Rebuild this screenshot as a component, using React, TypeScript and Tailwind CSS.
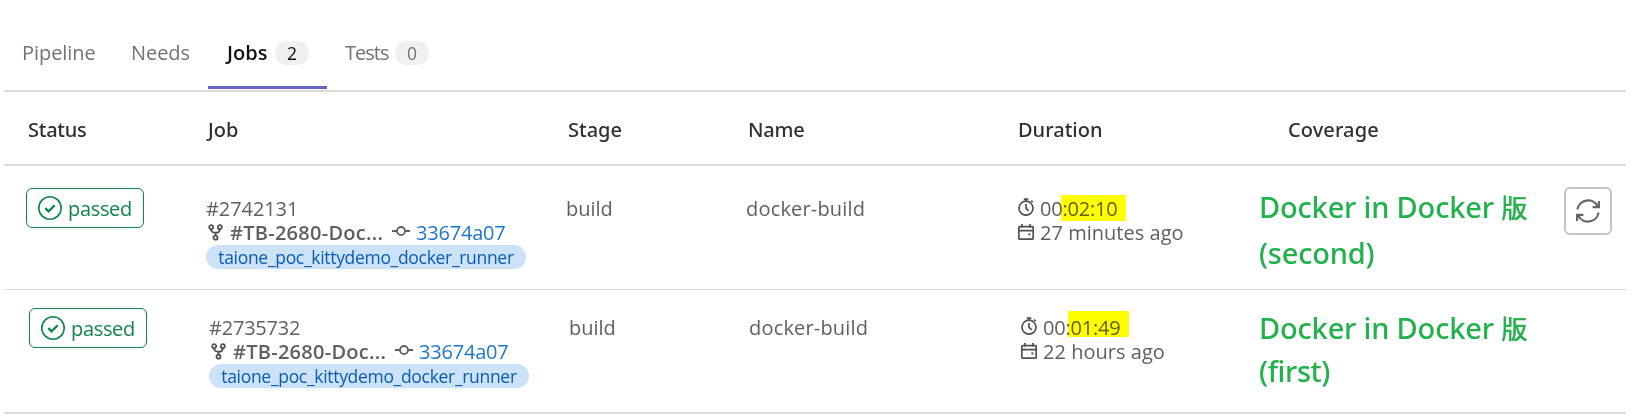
import type { ReactNode } from 'react';

type Job = {
  id: string;
  idTracking: string;
  highlight: string;
  duration: string;
  finished: string;
  note: string;
  noteClass: string;
  noteTracking: string;
  retry: boolean;
  rowClass: string;
  gridClass: string;
  badgeClass: string;
  cellClass: string;
};

const jobs: Job[] = [
  {
    id: '#2742131',
    idTracking: 'tracking-[-0.08px]',
    highlight: 'left-[21px] top-[-2px] w-[65px]',
    duration: '00:02:10',
    finished: '27 minutes ago',
    note: '(second)',
    noteClass: 'pt-[18px] leading-[46px]',
    noteTracking: 'tracking-[-0.2px]',
    retry: true,
    rowClass: 'h-[124px] border-b border-[#dbdbdb]',
    gridClass: 'grid-cols-[180px_360px_180px_271px_242px_305px_1fr] pl-[22px]',
    badgeClass: 'mt-[22px]',
    cellClass: 'pt-[31px]',
  },
  {
    id: '#2735732',
    idTracking: 'tracking-[-0.22px]',
    highlight: 'left-[25px] top-[-5px] w-[61px]',
    duration: '00:01:49',
    finished: '22 hours ago',
    note: '(first)',
    noteClass: 'pt-[16px] leading-[43px]',
    noteTracking: 'tracking-[-0.4px]',
    retry: false,
    rowClass: 'h-[124px] border-b-2 border-[#dbdbdb]',
    gridClass: 'grid-cols-[180px_360px_180px_271px_239px_305px_1fr] pl-[25px]',
    badgeClass: 'mt-[18px]',
    cellClass: 'pt-[26px]',
  },
];

function PassedIcon() {
  return (
    <svg className="size-6 shrink-0" viewBox="0 0 24 24" fill="none">
      <circle cx="12" cy="12" r="11.2" stroke="#108548" strokeWidth="1.6" />
      <path d="M7.3 12.2l3.2 3.1 6.2-6.1" stroke="#108548" strokeWidth="2.3" />
    </svg>
  );
}

function ForkIcon() {
  return (
    <svg className="h-[17px] w-[15px] shrink-0" viewBox="0 0 15 17" fill="none" stroke="#505050" strokeWidth="1.8">
      <circle cx="3.2" cy="3.2" r="2" />
      <circle cx="11.8" cy="3.2" r="2" />
      <circle cx="7.5" cy="13.7" r="2" />
      <path d="M3.2 5.2c0 2.6 1.4 3.5 4.3 3.5s4.3-.9 4.3-3.5M7.5 8.7v3" />
    </svg>
  );
}

function CommitIcon() {
  return (
    <svg className="h-[12px] w-[18px] shrink-0" viewBox="0 0 18 12" fill="none" stroke="#606060" strokeWidth="1.8">
      <circle cx="9" cy="6" r="4" />
      <path d="M0 6h5M13 6h5" />
    </svg>
  );
}

function TimerIcon() {
  return (
    <svg className="h-[18px] w-[16px] shrink-0" viewBox="0 0 16 18" fill="none" stroke="#505050" strokeWidth="1.7">
      <circle cx="8" cy="10.2" r="7" />
      <path d="M5.8 1.1h4.4M8 1v2.4M8 6v4.2l2.6 2.6M13.2 2.6l1.5 1.5" />
    </svg>
  );
}

function CalendarIcon() {
  return (
    <svg className="h-[16px] w-[16px] shrink-0" viewBox="0 0 16 16" fill="none" stroke="#505050" strokeWidth="1.7">
      <rect x="0.8" y="2.6" width="14.4" height="12.6" rx="1" />
      <path d="M1 6.6h14M4 0v3.6M12 0v3.6" />
      <path d="M10.4 10.4h2" strokeWidth="2" />
    </svg>
  );
}

function RetryIcon() {
  return (
    <svg className="size-6" viewBox="0 0 24 24" fill="none" stroke="#666" strokeWidth="2.2">
      <path d="M1.4 10.4A10.8 10.8 0 0 1 21.6 7.2M23 2v6.2h-6.4" />
      <path d="M22.6 13.6A10.8 10.8 0 0 1 2.4 16.8M1 22v-6.2h6.4" />
      <path d="M23 8.2h-4l4-4zM1 15.8h4l-4 4z" fill="#666" stroke="none" />
    </svg>
  );
}

function Count({ children }: { children: ReactNode }) {
  return (
    <span className="flex h-6 w-[34px] items-center justify-center rounded-full bg-[#f0f0f0] text-[17.5px] font-normal">
      {children}
    </span>
  );
}

function JobRow({ job }: { job: Job }) {
  return (
    <div className={job.rowClass}>
      <div className={`grid ${job.gridClass}`}>
        <div className={job.badgeClass}>
          <span className="flex h-[40px] w-[118px] items-center rounded-[6px] border border-[#108548] pl-[11px] text-[#108548]">
            <PassedIcon />
            <span className="ml-[6px] pt-[1px] tracking-[-0.33px]">passed</span>
          </span>
        </div>
        <div className={job.cellClass}>
          <div className={job.idTracking}>{job.id}</div>
          <div className="flex">
            <span className="ml-[2px] mt-[3px] flex w-[22px]">
              <ForkIcon />
            </span>
            <span className="w-[162px] font-semibold tracking-[0.27px]">#TB-2680-Doc...</span>
            <span className="mt-[4px] flex w-[24px]">
              <CommitIcon />
            </span>
            <span className="tracking-[-0.2px] text-[#1f75cb]">33674a07</span>
          </div>
          <div className="flex h-6 w-[320px] items-center justify-center rounded-full bg-[#cbe2f9] text-[17.5px] tracking-[-0.31px] text-[#0b5cad]">
            taione_poc_kittydemo_docker_runner
          </div>
        </div>
        <div className={job.cellClass}>build</div>
        <div className={`${job.cellClass} tracking-[0.18px]`}>docker-build</div>
        <div className={job.cellClass}>
          <div className="flex">
            <span className="ml-px mt-[1px] flex w-[22px]">
              <TimerIcon />
            </span>
            <span className="relative tracking-[-0.2px]">
              {job.duration}
              <span className={`absolute h-[26px] bg-[#ffff00] mix-blend-multiply ${job.highlight}`} />
            </span>
          </div>
          <div className="flex">
            <span className="ml-px mt-[3px] flex w-[22px]">
              <CalendarIcon />
            </span>
            <span className="tracking-[0.03px]">{job.finished}</span>
          </div>
        </div>
        <div
          className={`font-['Noto_Sans','Noto_Sans_CJK_TC',sans-serif] text-[29px] font-medium text-[#22b14c] ${job.noteClass}`}
        >
          <div className="whitespace-nowrap tracking-[-0.18px]">
            Docker in Docker{' '}
            <span className="font-['Noto_Sans_CJK_TC',sans-serif] text-[26px] font-normal [-webkit-text-stroke:0.6px_#22b14c]">
              版
            </span>
          </div>
          <div className={job.noteTracking}>{job.note}</div>
        </div>
        {job.retry && (
          <button className="mt-[21px] flex size-12 items-center justify-center rounded-[6px] border-2 border-[#c4c4c4] bg-white">
            <RetryIcon />
          </button>
        )}
      </div>
    </div>
  );
}

export default function App() {
  return (
    <div className="h-[418px] overflow-hidden bg-white pl-[4px] pr-[20px] font-['Open_Sans',sans-serif] text-[20px] leading-[24px] text-[#606060]">
      <nav className="flex h-[92px] border-b-2 border-[#dbdbdb] pl-[18px] pt-[41px] text-[#737373]">
        <span className="w-[109px] tracking-[-0.06px]">Pipeline</span>
        <span className="w-[77px] tracking-[-0.06px]">Needs</span>
        <span className="flex h-[48px] w-[119px] border-b-[3px] border-[#6666c4] pl-[19px] font-semibold text-[#111]">
          <span className="w-[48px]">Jobs</span>
          <Count>2</Count>
        </span>
        <span className="flex pl-[18px]">
          <span className="w-[50px] tracking-[-0.98px]">Tests</span>
          <Count>0</Count>
        </span>
      </nav>
      <div className="grid h-[74px] grid-cols-[180px_360px_180px_270px_270px_1fr] border-b-2 border-[#dbdbdb] pl-[24px] pt-[26px] font-['Noto_Sans',sans-serif] font-medium text-[#303030]">
        <span className="tracking-[-0.26px]">Status</span>
        <span>Job</span>
        <span>Stage</span>
        <span className="tracking-[-0.2px]">Name</span>
        <span>Duration</span>
        <span className="tracking-[0.1px]">Coverage</span>
      </div>
      {jobs.map((job) => (
        <JobRow key={job.id} job={job} />
      ))}
    </div>
  );
}
